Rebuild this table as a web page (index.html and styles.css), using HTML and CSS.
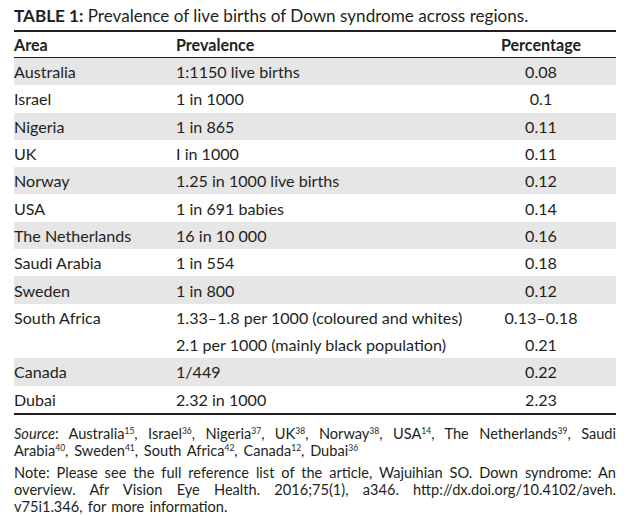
FILE: index.html
```html
<!DOCTYPE html>
<html>
<head>
<meta charset="utf-8">
<link rel="stylesheet" href="styles.css">
</head>
<body>
<div class="page">
  <div class="caption"><b>TABLE 1:</b> Prevalence of live births of Down syndrome across regions.</div>
  <table class="data">
    <colgroup><col class="c1"><col class="c2"><col class="c3"></colgroup>
    <thead>
      <tr><th class="l">Area</th><th class="l">Prevalence</th><th class="c">Percentage</th></tr>
    </thead>
    <tbody>
      <tr class="g"><td>Australia</td><td>1:1150 live births</td><td class="c">0.08</td></tr>
      <tr><td>Israel</td><td>1 in 1000</td><td class="c">0.1</td></tr>
      <tr class="g"><td>Nigeria</td><td>1 in 865</td><td class="c">0.11</td></tr>
      <tr><td>UK</td><td>I in 1000</td><td class="c">0.11</td></tr>
      <tr class="g"><td>Norway</td><td>1.25 in 1000 live births</td><td class="c">0.12</td></tr>
      <tr><td>USA</td><td>1 in 691 babies</td><td class="c">0.14</td></tr>
      <tr class="g"><td>The Netherlands</td><td>16 in 10 000</td><td class="c">0.16</td></tr>
      <tr><td>Saudi Arabia</td><td>1 in 554</td><td class="c">0.18</td></tr>
      <tr class="g"><td>Sweden</td><td>1 in 800</td><td class="c">0.12</td></tr>
      <tr><td>South Africa</td><td>1.33–1.8 per 1000 (coloured and whites)</td><td class="c">0.13–0.18</td></tr>
      <tr><td></td><td>2.1 per 1000 (mainly black population)</td><td class="c">0.21</td></tr>
      <tr class="g"><td>Canada</td><td>1/449</td><td class="c">0.22</td></tr>
      <tr><td>Dubai</td><td>2.32 in 1000</td><td class="c">2.23</td></tr>
    </tbody>
  </table>
  <p class="note src"><i>Source</i>: Australia<sup>15</sup>, Israel<sup>36</sup>, Nigeria<sup>37</sup>, UK<sup>38</sup>, Norway<sup>38</sup>, USA<sup>14</sup>, The Netherlands<sup>39</sup>, Saudi Arabia<sup>40</sup>, Sweden<sup>41</sup>, South Africa<sup>42</sup>, Canada<sup>12</sup>, Dubai<sup>36</sup></p>
  <p class="note ref">Note: Please see the full reference list of the article, Wajuihian SO. Down syndrome: An overview. Afr Vision Eye Health. 2016;75(1), a346. http://dx.doi.org/10.4102/aveh. v75i1.346, for more information.</p>
</div>
</body>
</html>
```
FILE: styles.css
```css
html, body {
  margin: 0;
  padding: 0;
  background: #ffffff;
}
.page {
  width: 602px;
  padding: 6px 14px 0 14px;
  font-family: Lato, "Open Sans", sans-serif;
  color: #231f20;
}
.caption {
  font-size: 17.1px;
  line-height: 20px;
  height: 24px;
  white-space: nowrap;
}
.caption b {
  font-weight: 700;
}
.data {
  width: 602px;
  border-collapse: collapse;
  border-top: 2px solid #231f20;
  border-bottom: 2px solid #231f20;
  font-size: 16.1px;
  table-layout: fixed;
}
.c1 { width: 162px; }
.c2 { width: 290px; }
.c3 { width: 150px; }
.data th {
  font-weight: 700;
  height: 25px;
  padding: 0;
  border-bottom: 1.5px solid #231f20;
  vertical-align: middle;
}
.data td {
  height: 27.3px;
  padding: 0;
  vertical-align: middle;
}
.l { text-align: left; }
.c { text-align: center; }
.data tr.g td {
  background: #e6e6e6;
}
.note {
  margin: 10px 0 0 0;
  font-size: 14.6px;
  line-height: 17px;
  text-align: justify;
}
.src {
  word-spacing: 2px;
}
.ref {
  word-spacing: 1.5px;
}
.note + .note {
  margin-top: 5px;
}
.note sup {
  font-size: 8.5px;
  line-height: 0;
  vertical-align: 5px;
}
```
